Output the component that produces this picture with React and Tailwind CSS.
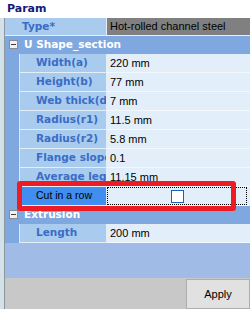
import React from "react";

const labelFont = { fontFamily: '"DejaVu Sans", Verdana, sans-serif' };
const valueFont = { fontFamily: '"Liberation Sans", Arial, sans-serif' };

const shapeRows = [
  { label: "Width(a)", value: "220 mm" },
  { label: "Height(b)", value: "77 mm" },
  { label: "Web thick(d)", value: "7 mm" },
  { label: "Radius(r1)", value: "11.5 mm" },
  { label: "Radius(r2)", value: "5.8 mm" },
  { label: "Flange slope", value: "0.1" },
  { label: "Average leg(t)", value: "11.15 mm" },
];

const Minus = () => (
  <div className="w-[9px] h-[9px] border border-[#8c8c8c] bg-[#f2f2f2] flex items-center justify-center shrink-0">
    <div className="w-[5px] h-px bg-[#3c3c3c]" />
  </div>
);

const Section = ({ title }) => (
  <div className="h-[18px] bg-[#7fa8e0] flex items-center pl-[4px] gap-[6px] border-b border-[#7fa8e0]">
    <Minus />
    <span className="text-white font-bold text-[10.5px]" style={labelFont}>{title}</span>
  </div>
);

const Row = ({ label, value, children, selected }) => (
  <div className="h-[19px] flex bg-[#7fa8e0]">
    <div className="w-[14px] shrink-0" />
    <div
      className={`w-[88px] shrink-0 border-l border-r border-b border-l-[#dbe8f6] border-r-[#e4eef9] border-b-[#e4eef9] overflow-hidden whitespace-nowrap flex items-center pl-[16px] ${
        selected ? "bg-[#3f8ef0]" : "bg-[#a8cbee]"
      }`}
    >
      {selected ? (
        <span className="text-black text-[10.5px]" style={valueFont}>{label}</span>
      ) : (
        <span className="text-[#3b6cc6] font-bold text-[10.5px]" style={labelFont}>{label}</span>
      )}
    </div>
    <div className="flex-1 bg-[#e2eef9] border-b border-[#f3f8fd] flex items-center pl-[3px]">
      {children ? children : (
        <span className="text-black text-[11px]" style={valueFont}>{value}</span>
      )}
    </div>
  </div>
);

export default function App() {
  return (
    <div className="relative w-[250px] h-[309px] flex flex-col overflow-hidden bg-white">
      {/* title */}
      <div className="h-[18px] bg-white flex items-center pl-[7px]">
        <span className="text-[#121a78] font-bold text-[11px]" style={labelFont}>Param</span>
      </div>

      <div className="flex flex-1">
        <div className="w-[5px] shrink-0 bg-[#d3e2e8] border-r border-[#8d969c]" />
        <div className="flex-1 flex flex-col">
          {/* type */}
          <div className="h-[18px] flex">
            <div className="w-[102px] shrink-0 bg-[#a8cbee] border-r border-b border-[#e4eef9] flex items-center pl-[17px]">
              <span className="text-[#3b6cc6] font-bold text-[10.5px]" style={labelFont}>Type*</span>
            </div>
            <div className="flex-1 bg-[#808080] border-b border-[#e4eef9] flex items-center pl-[3px] whitespace-nowrap overflow-hidden">
              <span className="text-black text-[11px]" style={valueFont}>Hot-rolled channel steel</span>
            </div>
          </div>

          <Section title="U Shape_section" />
          {shapeRows.map((r, i) => (
            <Row key={i} label={r.label} value={r.value} />
          ))}
          <Row label="Cut in a row" selected>
            <div className="w-full h-full border border-dotted border-black flex items-center justify-center mr-[1px] -ml-[3px]">
              <div className="w-[13px] h-[13px] bg-white border border-[#1662b8]" />
            </div>
          </Row>

          <Section title="Extrusion" />
          <Row label="Length" value="200 mm" />

          <div className="flex-1 bg-[#a0bce6]" />

          {/* button bar */}
          <div className="h-[31px] bg-[#c8c8c8] flex justify-end pt-px">
            <button className="w-[64px] h-full bg-[#e1e1e1] border border-[#adadad] flex items-center justify-center">
              <span className="text-black text-[11px]" style={valueFont}>Apply</span>
            </button>
          </div>
        </div>
      </div>

      {/* red highlight */}
      <div className="absolute left-[17px] top-[181px] w-[219px] h-[30px] border-[5px] border-[#ed1c24] rounded-[3px]" />
    </div>
  );
}
